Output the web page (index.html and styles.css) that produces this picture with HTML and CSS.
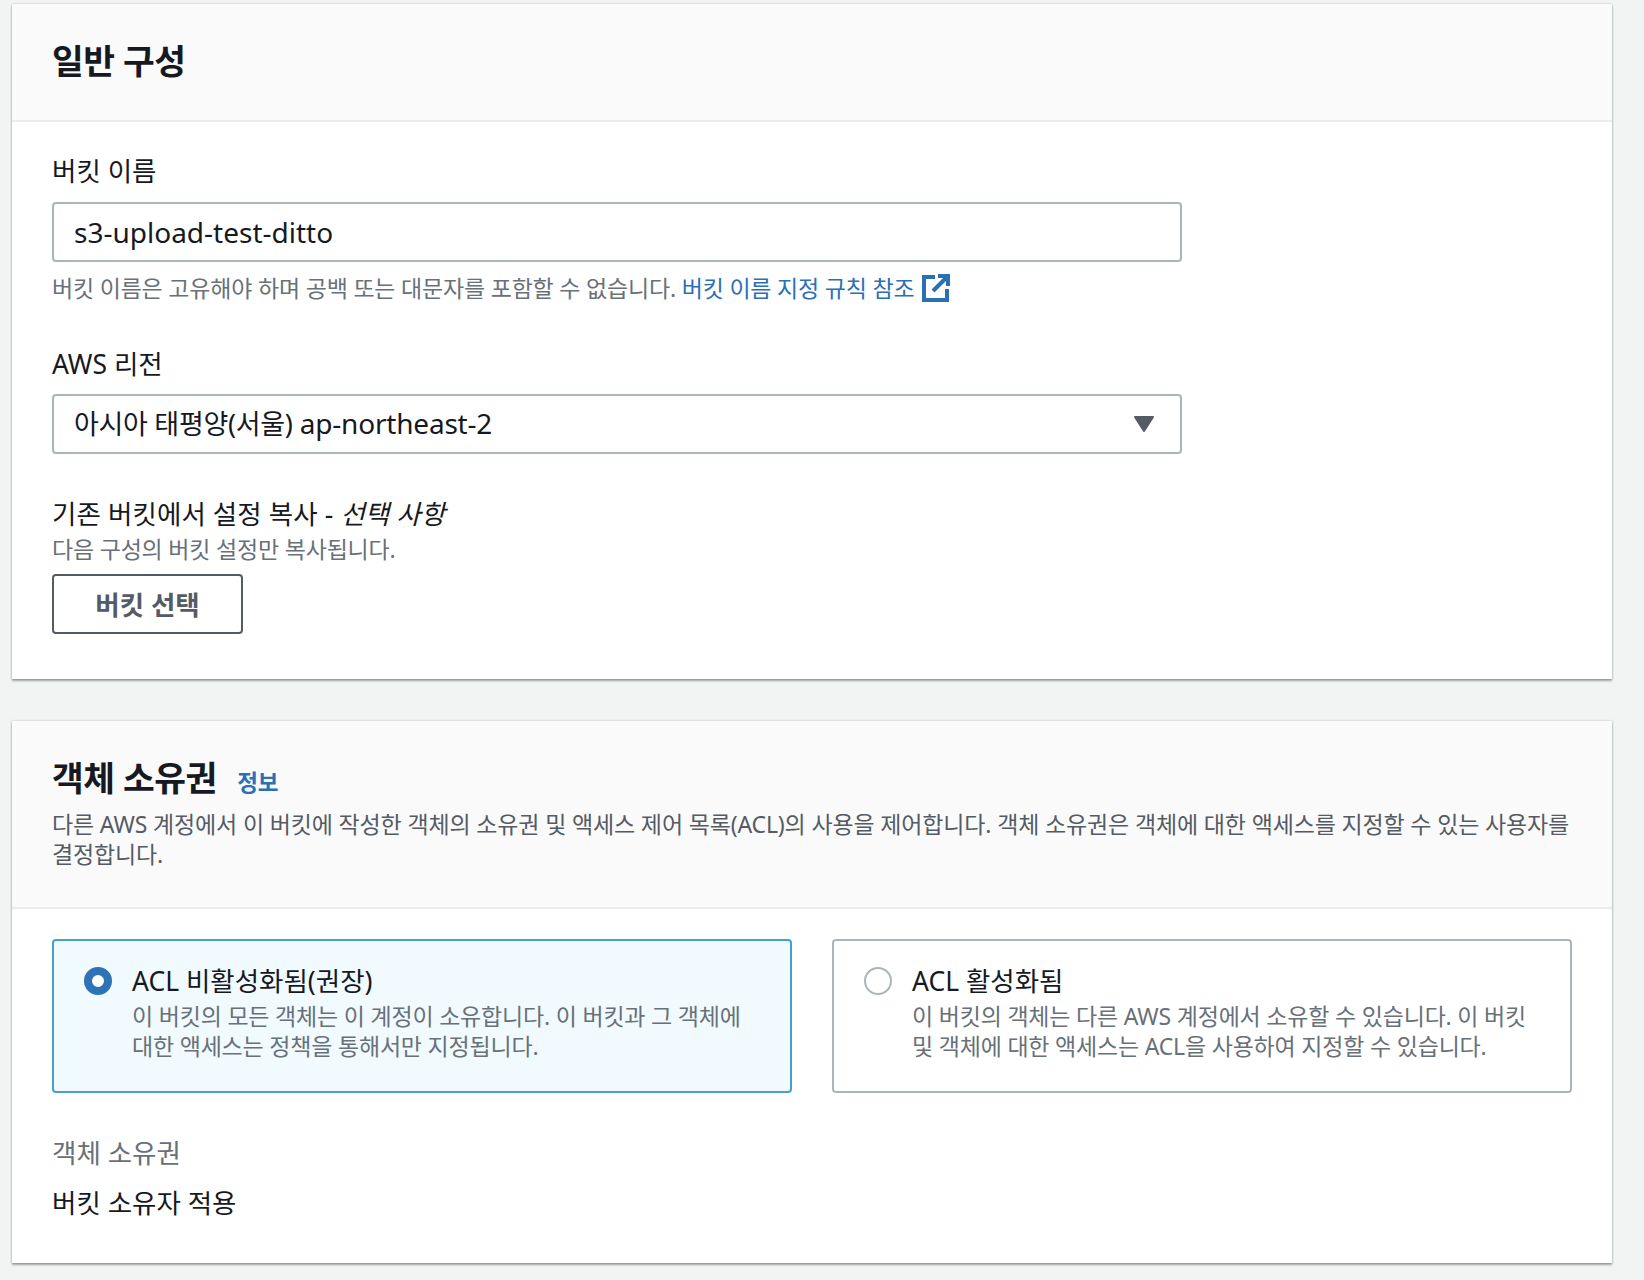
FILE: index.html
```html
<!DOCTYPE html>
<html lang="ko">
<head>
<meta charset="utf-8">
<title>버킷 만들기</title>
<link rel="stylesheet" href="styles.css">
</head>
<body>
<main class="page">
  <section class="card">
    <header class="card-head">
      <h2 class="title">일반 구성</h2>
    </header>
    <div class="card-body general">
      <label class="label">버킷 이름</label>
      <div class="field input-field">s3-upload-test-ditto</div>
      <p class="hint hint-name">버킷 이름은 고유해야 하며 공백 또는 대문자를 포함할 수 없습니다. <a class="link" href="#">버킷 이름 지정 규칙 참조
        <svg class="ext" viewBox="0 0 28 28" width="28" height="28"><path d="M13 3H2v23h23V15" fill="none" stroke="currentColor" stroke-width="4"/><path d="M11 17 24 4" fill="none" stroke="currentColor" stroke-width="4"/><path d="M16 2h10v10" fill="none" stroke="currentColor" stroke-width="4"/></svg></a></p>
      <label class="label label-region">AWS 리전</label>
      <div class="field select-field">
        <span class="select-value"><span class="field-kr">아시아 태평양(서울)</span> ap-northeast-2</span>
        <svg class="caret" viewBox="0 0 20 16" width="20" height="16"><path d="M1 1h18L10 15z" fill="#545b64" stroke="#545b64" stroke-width="2" stroke-linejoin="round"/></svg>
      </div>
      <label class="label label-copy">기존 버킷에서 설정 복사 - <em>선택 사항</em></label>
      <p class="hint hint-copy">다음 구성의 버킷 설정만 복사됩니다.</p>
      <button class="btn" type="button">버킷 선택</button>
    </div>
  </section>

  <section class="card card-owner">
    <header class="card-head">
      <h2 class="title">객체 소유권 <a class="info" href="#">정보</a></h2>
      <p class="desc">다른 AWS 계정에서 이 버킷에 작성한 객체의 소유권 및 액세스 제어 목록(ACL)의 사용을 제어합니다. 객체 소유권은 객체에 대한 액세스를 지정할 수 있는 사용자를 결정합니다.</p>
    </header>
    <div class="card-body owner">
      <div class="tiles">
        <div class="tile selected">
          <span class="radio checked"></span>
          <div class="tile-text">
            <div class="tile-title">ACL 비활성화됨(권장)</div>
            <p class="tile-desc">이 버킷의 모든 객체는 이 계정이 소유합니다. 이 버킷과 그 객체에 대한 액세스는 정책을 통해서만 지정됩니다.</p>
          </div>
        </div>
        <div class="tile">
          <span class="radio"></span>
          <div class="tile-text">
            <div class="tile-title">ACL 활성화됨</div>
            <p class="tile-desc">이 버킷의 객체는 다른 AWS 계정에서 소유할 수 있습니다. 이 버킷 및 객체에 대한 액세스는 ACL을 사용하여 지정할 수 있습니다.</p>
          </div>
        </div>
      </div>
      <div class="kv-key">객체 소유권</div>
      <div class="kv-value">버킷 소유자 적용</div>
    </div>
  </section>
</main>
</body>
</html>
```
FILE: styles.css
```css
* { box-sizing: border-box; }
html, body { margin: 0; padding: 0; }
body {
  background: #f2f3f3;
  color: #16191f;
  font-family: "Noto Sans", "Noto Sans CJK KR", sans-serif;
  font-size: 26.5px;
}
.page { padding: 4px 32px 17px 12px; }
.card {
  background: #fff;
  box-shadow: 0 2px 2px rgba(0, 28, 36, .35), 0 0 2px rgba(0, 28, 36, .25);
}
.card-owner { margin-top: 42px; }
.card-head {
  background: #fafafa;
  border-bottom: 2px solid #eaeded;
  padding: 37px 40px 39px;
}
.card-owner .card-head { padding-bottom: 38px; }
.title {
  margin: 0;
  font-size: 34.5px;
  line-height: 40px;
  font-weight: 700;
  letter-spacing: -.5px;
}
.info {
  color: #2b6fb6;
  font-size: 22.5px;
  font-weight: 700;
  text-decoration: none;
  margin-left: 12px;
  letter-spacing: 0;
}
.desc {
  margin: 6px 0 0;
  font-size: 23px;
  line-height: 30px;
  letter-spacing: -.15px;
  color: #545b64;
}
.card-body { padding: 34px 40px 45px; }
.general { padding-top: 33px; }
.label {
  display: block;
  font-size: 26.5px;
  line-height: 32px;
}
.label em { font-style: italic; }
.label-region { margin-top: 45px; }
.label-copy { margin-top: 44px; letter-spacing: .1px; }
.field {
  width: 1130px;
  height: 60px;
  margin-top: 14px;
  padding: 0 20px;
  display: flex;
  align-items: center;
  justify-content: space-between;
  border: 2px solid #aab7b8;
  border-radius: 4px;
  background: #fff;
  font-size: 28px;
}
.input-field { margin-top: 15px; }
.select-value { padding-bottom: 3px; letter-spacing: -.2px; }
.field-kr { font-size: 27px; letter-spacing: -.3px; }
.caret { margin-right: 6px; }
.hint {
  margin: 0;
  font-size: 23px;
  line-height: 30px;
  letter-spacing: -.2px;
  color: #687078;
}
.hint-name { margin-top: 11px; }
.hint-copy { margin-top: 4px; }
.link { color: #2b6fb6; text-decoration: none; }
.ext { vertical-align: -5px; margin-left: 2px; }
.btn {
  display: block;
  width: 191px;
  height: 60px;
  margin-top: 10px;
  padding: 0 0 2px;
  background: #fff;
  border: 2px solid #545b64;
  border-radius: 4px;
  color: #545b64;
  font: 700 26.5px "Noto Sans", "Noto Sans CJK KR", sans-serif;
}
.owner { padding: 30px 40px 44px; }
.tiles {
  display: grid;
  grid-template-columns: 1fr 1fr;
  gap: 40px;
}
.tile {
  height: 154px;
  padding: 26px 30px 0;
  display: flex;
  gap: 20px;
  border: 2px solid #aab7b8;
  border-radius: 4px;
}
.tile.selected { background: #f1faff; border-color: #44a0ce; }
.radio {
  flex: none;
  width: 28px;
  height: 28px;
  border: 2px solid #aab7b8;
  border-radius: 50%;
  background: #fff;
}
.radio.checked { border: 8px solid #2e72b8; }
.tile-text { margin-top: -2px; }
.tile-title { font-size: 26.5px; line-height: 32px; }
.tile-desc {
  margin: 4px 0 0;
  font-size: 23px;
  line-height: 30px;
  letter-spacing: -.2px;
  color: #687078;
}
.kv-key {
  margin-top: 44px;
  line-height: 32px;
  color: #687078;
}
.kv-value { margin-top: 18px; line-height: 32px; }
```
